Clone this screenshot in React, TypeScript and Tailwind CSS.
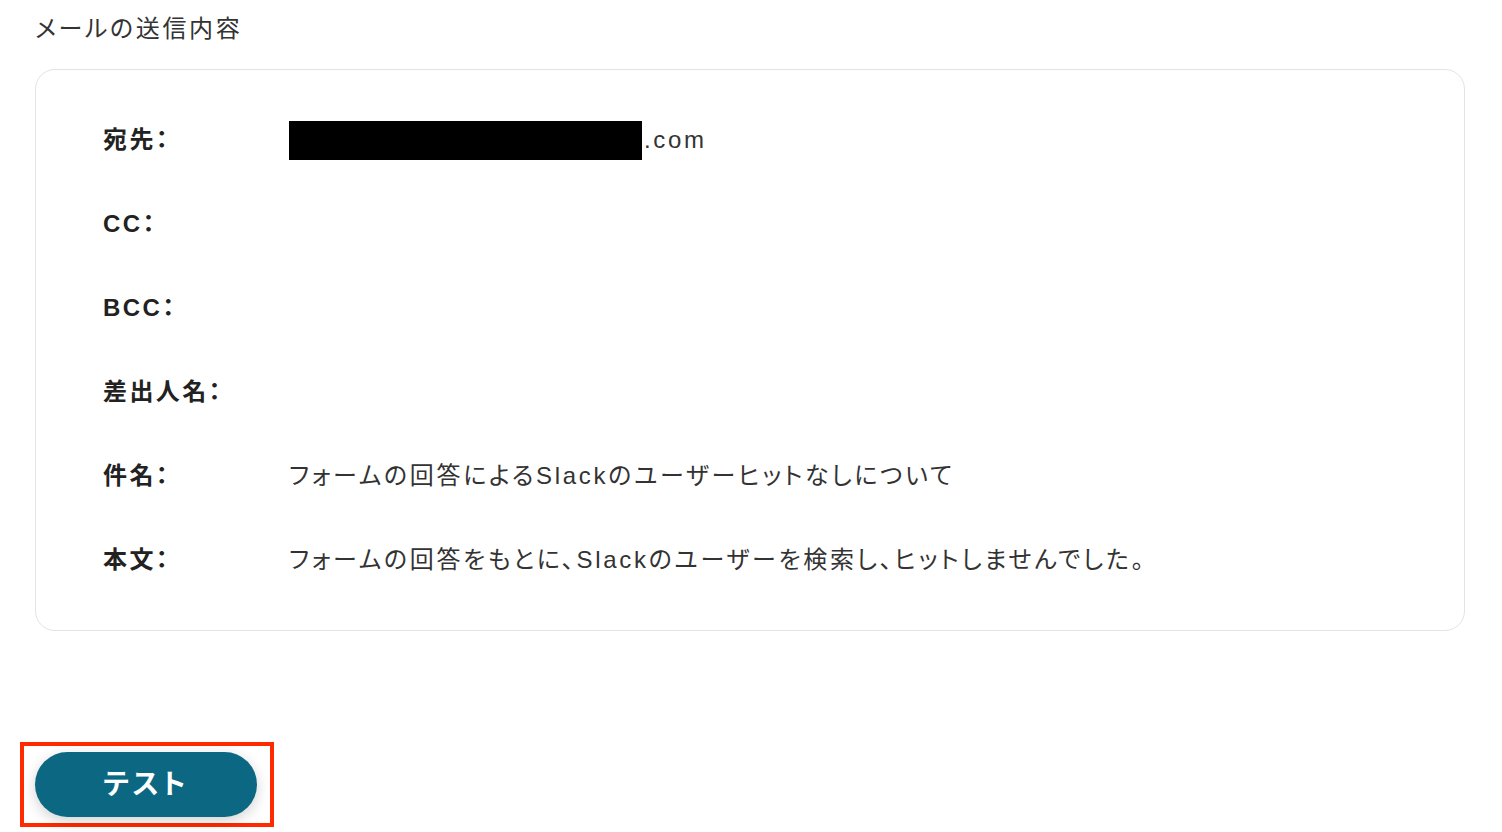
const ROWS: { label: string; value?: React.ReactNode }[] = [
  {
    label: "宛先：",
    value: (
      <span className="flex items-center">
        <span className="inline-block w-[353px] h-[39px] bg-black" aria-hidden />
        <span className="ml-[2px]">.com</span>
      </span>
    ),
  },
  { label: "CC：" },
  { label: "BCC：" },
  { label: "差出人名：" },
  { label: "件名：", value: "フォームの回答によるSlackのユーザーヒットなしについて" },
  { label: "本文：", value: "フォームの回答をもとに、Slackのユーザーを検索し、ヒットしませんでした。" },
];

export default function App() {
  return (
    <div
      className="w-[1502px] h-[832px] bg-white overflow-hidden text-[#333333] [font-feature-settings:'palt'] pl-[35px] pr-[37px]"
      style={{ fontFamily: '"Liberation Sans", "Noto Sans CJK JP", sans-serif' }}
    >
      {/* Section heading */}
      <h2 className="pt-[13px] h-[69px] text-[24px] leading-[32px] tracking-[0.11em] text-[#333333]">
        メールの送信内容
      </h2>

      {/* Mail contents card */}
      <div className="border border-[#e3e3e3] rounded-[20px] pt-[28px] pb-[28px] pl-[67px]">
        {ROWS.map((row) => (
          <div key={row.label} className="flex items-center h-[84px]">
            <p className="w-[186px] shrink-0 text-[24px] font-bold tracking-[0.1em] text-[#222222]">
              {row.label}
            </p>
            <div className="text-[24px] tracking-[0.112em] text-[#333333]">{row.value}</div>
          </div>
        ))}
      </div>

      {/* Test button, outlined in red */}
      <div className="mt-[111px] -ml-[15px] w-[254px] h-[85px] border-4 border-[#ff2a00] pl-[11px] pt-[6px]">
        <button className="w-[222px] h-[65px] rounded-full bg-[#0c6882] text-white text-[28px] leading-none font-bold tracking-[0.12em] shadow-[0_4px_14px_rgba(0,0,0,0.18)]">
          テスト
        </button>
      </div>
    </div>
  );
}
